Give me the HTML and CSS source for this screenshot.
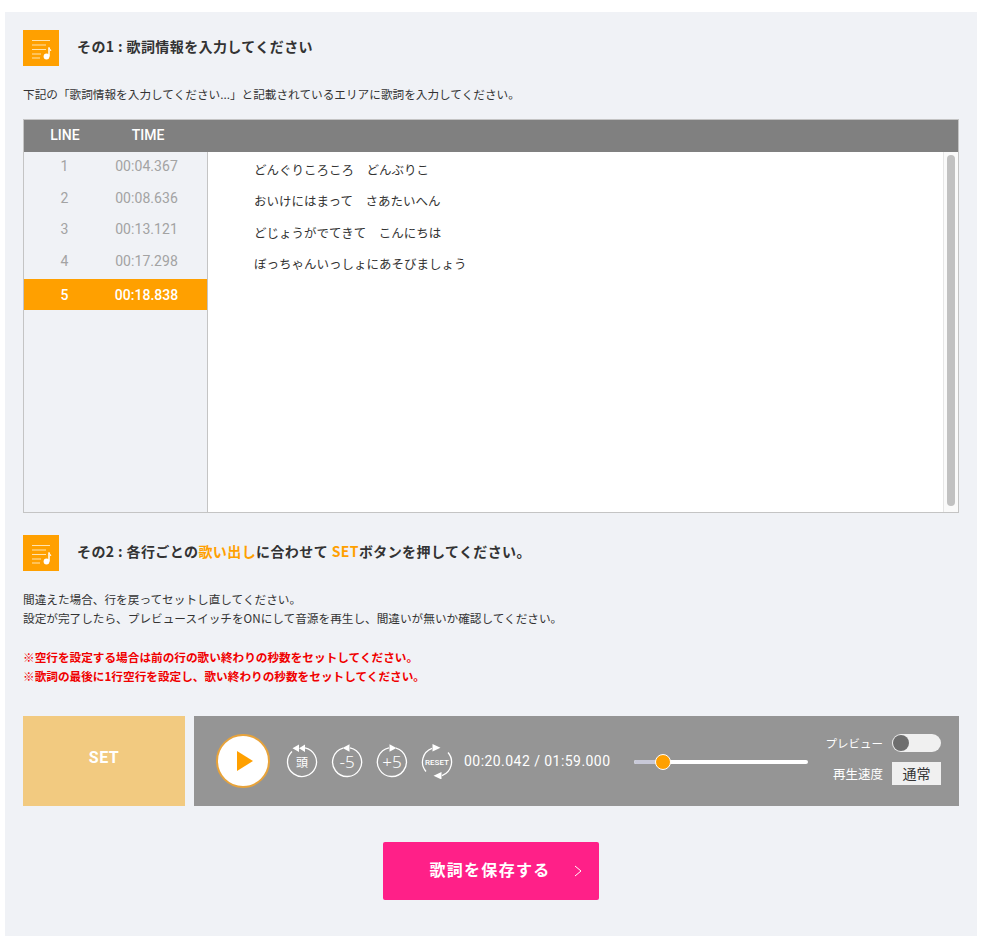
FILE: index.html
```html
<!DOCTYPE html>
<html lang="ja">
<head>
  <meta charset="UTF-8">
  <title>歌詞情報の入力</title>
  <link rel="stylesheet" href="styles.css">
</head>
<body>
  <main class="panel">
    <div class="step-head">
      <span class="step-icon">
        <svg width="36" height="36" viewBox="0 0 36 36">
          <path d="M9 10.500h18M9 15h14M9 19.500h14M9 24h9M9 28h8" stroke="#ffe3b0" stroke-width="1.200" fill="none"/>
          <path d="M26 17.500v9" stroke="#fff" stroke-width="1.500"/>
          <path d="M26 17.500c.3 1.500 1.800 1.800 1.800 3.500" stroke="#fff" stroke-width="1" fill="none"/>
          <circle cx="23.500" cy="26.500" r="2.900" fill="#fff"/>
        </svg>
      </span>
      <h2>その1 : 歌詞情報を入力してください</h2>
    </div>
    <p class="desc">下記の「歌詞情報を入力してください...」と記載されているエリアに歌詞を入力してください。</p>

    <div class="editor">
      <div class="editor-head">
        <span class="col-line">LINE</span>
        <span class="col-time">TIME</span>
      </div>
      <div class="editor-body">
        <ul class="lines">
          <li><span class="col-line">1</span><span class="col-time">00:04.367</span></li>
          <li><span class="col-line">2</span><span class="col-time">00:08.636</span></li>
          <li><span class="col-line">3</span><span class="col-time">00:13.121</span></li>
          <li><span class="col-line">4</span><span class="col-time">00:17.298</span></li>
          <li class="active"><span class="col-line">5</span><span class="col-time">00:18.838</span></li>
        </ul>
        <div class="lyrics">
          <p>どんぐりころころ　どんぶりこ</p>
          <p>おいけにはまって　さあたいへん</p>
          <p>どじょうがでてきて　こんにちは</p>
          <p>ぼっちゃんいっしょにあそびましょう</p>
        </div>
        <div class="scrollbar"><div class="thumb"></div></div>
      </div>
    </div>

    <div class="step-head step-two">
      <span class="step-icon">
        <svg width="36" height="36" viewBox="0 0 36 36">
          <path d="M9 10.500h18M9 15h14M9 19.500h14M9 24h9M9 28h8" stroke="#ffe3b0" stroke-width="1.200" fill="none"/>
          <path d="M26 17.500v9" stroke="#fff" stroke-width="1.500"/>
          <path d="M26 17.500c.3 1.500 1.800 1.800 1.800 3.500" stroke="#fff" stroke-width="1" fill="none"/>
          <circle cx="23.500" cy="26.500" r="2.900" fill="#fff"/>
        </svg>
      </span>
      <h2>その2 : 各行ごとの<em>歌い出し</em>に合わせて <em>SET</em>ボタンを押してください。</h2>
    </div>
    <p class="desc note">間違えた場合、行を戻ってセットし直してください。<br>設定が完了したら、プレビュースイッチをONにして音源を再生し、間違いが無いか確認してください。</p>
    <p class="desc warn">※空行を設定する場合は前の行の歌い終わりの秒数をセットしてください。<br>※歌詞の最後に1行空行を設定し、歌い終わりの秒数をセットしてください。</p>

    <div class="controls">
      <button class="set-btn">SET</button>
      <div class="player">
        <button class="play-btn">
          <svg width="18" height="20" viewBox="0 0 18 20"><path d="M1 0l16 10L1 20z" fill="#ffa000"/></svg>
        </button>
        <div class="skips">
          <svg class="skip" width="32" height="36" viewBox="0 0 32 36">
            <path d="M19 4.800A14.500 14.500 0 1 1 6 8.500" fill="none" stroke="#fff" stroke-width="1.300"/>
            <path d="M13 1.500v7.500l-6.500-3.750zM19 1.500v7.500l-6-3.750z" fill="#fff"/>
            <text x="16" y="24" class="skip-kanji">頭</text>
          </svg>
          <svg class="skip" width="32" height="36" viewBox="0 0 32 36">
            <path d="M19 4.800A14.500 14.500 0 1 1 12 5.100" fill="none" stroke="#fff" stroke-width="1.300"/>
            <path d="M18.500 1.200v7.500l-7-3.750z" fill="#fff"/>
            <text x="16" y="25" class="skip-num">-5</text>
          </svg>
          <svg class="skip" width="32" height="36" viewBox="0 0 32 36">
            <path d="M13 4.800A14.500 14.500 0 1 0 20 5.100" fill="none" stroke="#fff" stroke-width="1.300"/>
            <path d="M13.500 1.200v7.500l7-3.750z" fill="#fff"/>
            <text x="16" y="25" class="skip-num">+5</text>
          </svg>
          <svg class="skip" width="32" height="36" viewBox="0 0 32 36">
            <path d="M11 5.400A14.500 14.500 0 0 0 5 28.500M21 32.600A14.500 14.500 0 0 0 27 9.500" fill="none" stroke="#fff" stroke-width="1.300"/>
            <path d="M11.500 1v7.500l8-3.750zM20.500 36.500v-7.500l-8 3.750z" fill="#fff"/>
            <text x="16" y="21.500" class="skip-reset">RESET</text>
          </svg>
        </div>
        <span class="clock">00:20.042 / 01:59.000</span>
        <div class="seek"><div class="seek-done"></div><div class="seek-knob"></div></div>
        <div class="options">
          <div class="option">
            <span class="preview-label">プレビュー</span>
            <span class="toggle"><span class="toggle-knob"></span></span>
          </div>
          <div class="option">
            <span>再生速度</span>
            <span class="speed">通常</span>
          </div>
        </div>
      </div>
    </div>

    <div class="save-row">
      <button class="save-btn">歌詞を保存する
        <svg class="chev" width="8" height="12" viewBox="0 0 8 12"><path d="M1 1l6 5-6 5" fill="none" stroke="#fff" stroke-width="1"/></svg>
      </button>
    </div>
  </main>
</body>
</html>
```

FILE: styles.css
```css
* {
  box-sizing: border-box;
}
html, body {
  height: 100%;
}
body {
  margin: 0;
  padding: 12px 5px 0;
  background: #fff;
  color: #333;
  font-family: "Noto Sans CJK JP", "Noto Sans", sans-serif;
  overflow: hidden;
}
.panel {
  height: 924px;
  padding: 18px 18px 0;
  background: #f0f2f6;
}
.step-head {
  display: flex;
  align-items: center;
  height: 36px;
}
.step-icon {
  display: block;
  width: 36px;
  height: 36px;
  background: #ffa000;
}
.step-head h2 {
  margin: 0 0 0 18px;
  padding-bottom: 3px;
  font-size: 14px;
  font-weight: 700;
  line-height: 33px;
  letter-spacing: .4px;
}
.step-head em {
  color: #ffa000;
  font-style: normal;
}
.desc {
  margin: 18px 0 0;
  font-size: 11.650px;
  line-height: 19px;
  color: #333;
}
.editor {
  margin-top: 16px;
  width: 936px;
  height: 394px;
  border: 1px solid #c4c4c4;
  background: #fff;
}
.editor-head {
  display: flex;
  height: 32px;
  padding-bottom: 2px;
  align-items: center;
  background: #808080;
  color: #fff;
  font-family: Roboto, sans-serif;
  font-size: 14px;
  font-weight: 500;
}
.col-line {
  width: 82px;
  text-align: center;
}
.col-time {
  width: 84px;
  text-align: center;
}
.editor-body {
  display: flex;
  height: 360px;
}
.lines {
  list-style: none;
  margin: 0;
  padding: 0;
  width: 184px;
  flex: none;
  background: #f0f2f6;
  border-right: 1px solid #c4c4c4;
  font-family: Roboto, sans-serif;
  font-size: 14px;
  color: #a3a3a3;
}
.lines li {
  display: flex;
  align-items: center;
  height: 31.500px;
  padding-bottom: 3px;
}
.lines .col-line {
  width: 81px;
}
.lines .col-time {
  width: 83px;
  letter-spacing: .05px;
}
.lines .active {
  height: 31px;
  margin-top: 1px;
  padding-bottom: 0;
  background: #ffa000;
  color: #fff;
  font-weight: 500;
}
.lyrics {
  flex: 1;
  padding: 2px 0 0 46px;
  font-size: 12.500px;
  color: #333;
}
.lyrics p {
  margin: 0;
  line-height: 31.400px;
}
.scrollbar {
  width: 15px;
  flex: none;
  padding: 3px 3px 6px;
  background: #fafafa;
  border-left: 1px solid #e6e6e6;
}
.thumb {
  height: 100%;
  border-radius: 4px;
  background: #c1c1c1;
}
.step-two {
  margin-top: 22px;
}
.note {
  margin-top: 18px;
}
.warn {
  margin-top: 20px;
  color: #f00000;
  font-weight: 700;
}
.controls {
  display: flex;
  gap: 9px;
  margin-top: 31px;
  height: 90px;
  width: 936px;
}
.set-btn {
  width: 162px;
  border: 0;
  padding: 0 0 8px;
  background: #f2ca80;
  color: #fff;
  font-family: Roboto, sans-serif;
  font-size: 16px;
  font-weight: 700;
  letter-spacing: .5px;
}
.player {
  flex: 1;
  display: flex;
  align-items: center;
  padding: 0 18px 0 22px;
  background: #959595;
  color: #fff;
}
.play-btn {
  display: flex;
  align-items: center;
  justify-content: center;
  width: 54px;
  height: 54px;
  flex: none;
  padding: 0 0 0 4px;
  border: 2px solid #e8a33a;
  border-radius: 50%;
  background: #fff;
}
.skips {
  display: flex;
  gap: 13px;
  margin-left: 16px;
}
.skip text {
  fill: #fff;
  text-anchor: middle;
}
.skip-kanji {
  font-size: 12px;
}
.skip-num {
  font-size: 17px;
  font-family: "Noto Sans", sans-serif;
  font-weight: 300;
}
.skip-reset {
  font-size: 8px;
  font-family: Roboto, sans-serif;
  font-weight: 500;
}
.clock {
  margin-left: 11px;
  font-family: Roboto, sans-serif;
  font-size: 14px;
  letter-spacing: .45px;
  white-space: nowrap;
}
.seek {
  position: relative;
  width: 174px;
  height: 4px;
  margin: 2px 0 0 23px;
  border-radius: 2px;
  background: #fff;
  flex: none;
}
.seek-done {
  width: 28px;
  height: 4px;
  border-radius: 2px 0 0 2px;
  background: #c8c9d8;
}
.seek-knob {
  position: absolute;
  left: 21px;
  top: -6px;
  width: 16px;
  height: 16px;
  border: 1px solid #fff;
  border-radius: 50%;
  background: #ffa000;
}
.options {
  margin-left: auto;
  padding-bottom: 4px;
  display: flex;
  flex-direction: column;
  align-items: flex-end;
  gap: 10px;
  font-size: 12.500px;
}
.option {
  display: flex;
  align-items: center;
  gap: 9px;
  height: 18px;
}
.option:last-child {
  height: 23px;
}
.preview-label {
  font-size: 11.500px;
}
.toggle {
  display: block;
  width: 49px;
  height: 18px;
  padding: 1px;
  border-radius: 9px;
  background: #f0f0f0;
}
.toggle-knob {
  display: block;
  width: 16px;
  height: 16px;
  border-radius: 50%;
  background: #6e6e6e;
}
.speed {
  width: 49px;
  height: 23px;
  background: #f0f0f0;
  color: #333;
  font-size: 14px;
  line-height: 23px;
  text-align: center;
}
.save-row {
  display: flex;
  justify-content: center;
  margin-top: 36px;
}
.save-btn {
  position: relative;
  width: 216px;
  height: 58px;
  padding: 0 2px 4px 0;
  border: 0;
  border-radius: 2px;
  background: #ff2088;
  color: #fff;
  font-family: "Noto Sans CJK JP", sans-serif;
  font-size: 16px;
  font-weight: 700;
  letter-spacing: 1.300px;
}
.chev {
  position: absolute;
  right: 17px;
  top: 23px;
}
```
